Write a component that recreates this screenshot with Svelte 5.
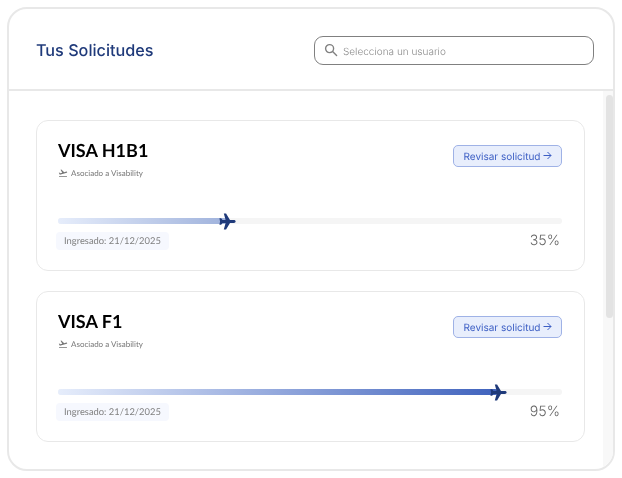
<script>
  const items = [
    { name: 'VISA H1B1', pct: 35, fill: 169, stops: '#e6edfb, #9fb2dc' },
    { name: 'VISA F1', pct: 95, fill: 440, stops: '#e6edfb, #3f62bd' }
  ];
</script>

<div class="shell">
  <header class="top">
    <h1>Tus Solicitudes</h1>
    <div class="search">
      <svg width="14" height="14" viewBox="0 0 14 14" fill="none" stroke="#808080" stroke-width="1.4">
        <circle cx="5.6" cy="5.6" r="4" />
        <path d="M8.6 8.6L12.6 12.6" stroke-linecap="round" />
      </svg>
      <span>Selecciona un usuario</span>
    </div>
  </header>
  <div class="body">
    <main class="list">
      {#each items as item}
        <section class="card">
          <div class="row">
            <div>
              <h2>{item.name}</h2>
              <div class="assoc">
                <svg width="10" height="10" viewBox="0 0 24 24" fill="#777">
                  <path d="M2.5 19h19v2h-19v-2zm19.57-9.36c-.21-.8-1.04-1.28-1.84-1.06L14.92 10l-6.9-6.43-1.93.51 4.14 7.17-4.97 1.33-1.97-1.54-1.45.39 2.59 4.49 16.57-4.43c.81-.23 1.28-1.05 1.07-1.85z" />
                </svg>
                <span>Asociado a Visability</span>
              </div>
            </div>
            <div class="btn">
              <span>Revisar solicitud</span>
              <svg width="9" height="10" viewBox="0 0 9 10" fill="none" stroke="#3d5fc4" stroke-width="1">
                <path d="M.5 4.500H8M4.500 1L8 4.500L4.500 8" />
              </svg>
            </div>
          </div>
          <div class="track">
            <div class="fill" style="width: {item.fill}px; background: linear-gradient(90deg, {item.stops})">
              <svg class="plane" width="17" height="17" viewBox="0 0 24 24" fill="#1f3a7a">
                <path d="M23.500 12c0-1.200-1.200-2-2.400-2H15.500L10 .8H6.800l2.500 9.200H5L3 7.500H.6l.9 4.500-.9 4.500H3L5 14h4.300L6.800 23.200H10L15.500 14h5.600C22.300 14 23.500 13.200 23.500 12z" />
              </svg>
            </div>
          </div>
          <div class="foot">
            <span class="date">Ingresado: 21/12/2025</span>
            <span class="pct">{item.pct}%</span>
          </div>
        </section>
      {/each}
    </main>
    <div class="scroll"><div class="thumb"></div></div>
  </div>
</div>

<style>
  :global(body) {
    margin: 0;
    background: #fff;
  }
  .shell {
    box-sizing: border-box;
    width: 608px;
    height: 464px;
    margin: 7px 0 0 7px;
    border: 2px solid #e8e8e8;
    border-radius: 20px;
    background: #fff;
    display: flex;
    flex-direction: column;
    overflow: hidden;
    text-rendering: geometricPrecision;
    will-change: transform;
  }
  .top {
    box-sizing: border-box;
    height: 82px;
    flex: none;
    border-bottom: 2px solid #e8e8e8;
    display: flex;
    align-items: center;
    justify-content: space-between;
    padding: 2px 19px 0 27px;
  }
  h1 {
    margin: 0 0 1px;
    font: 500 16.2px/20px Inter, sans-serif;
    color: #1f3a7a;
  }
  .search {
    box-sizing: border-box;
    width: 280px;
    height: 29px;
    border: 1px solid #808080;
    border-radius: 9px;
    display: flex;
    align-items: center;
    gap: 5px;
    padding: 0 9px;
  }
  .search span {
    font: 300 10px/14px Inter, sans-serif;
    color: #8a8a8a;
    position: relative;
    top: 2px;
  }
  .body {
    flex: 1;
    min-height: 0;
    display: flex;
  }
  .list {
    flex: 1;
    padding: 29px 18px 0 27px;
    display: flex;
    flex-direction: column;
    gap: 20px;
  }
  .card {
    box-sizing: border-box;
    height: 151px;
    border: 1px solid #e8e8e8;
    border-radius: 12px;
    padding: 17px 22px 0 21px;
  }
  .row {
    display: flex;
    justify-content: space-between;
    align-items: flex-start;
    height: 80px;
  }
  h2 {
    margin: 0;
    font: 700 18px/24px Lato, sans-serif;
    color: #000;
  }
  .assoc {
    display: flex;
    align-items: center;
    gap: 3px;
    margin-top: 5px;
  }
  .assoc span {
    font: 400 8px/12px Lato, sans-serif;
    color: #777;
  }
  .btn {
    box-sizing: border-box;
    margin-top: 7px;
    width: 109px;
    height: 22px;
    padding-top: 1px;
    border: 1px solid #9fb2e6;
    border-radius: 5px;
    background: #e8eefc;
    display: flex;
    align-items: center;
    justify-content: center;
    gap: 2px;
    font: 400 10px/14px Inter, sans-serif;
    color: #3d5fc4;
  }
  .btn svg {
    margin-top: -2px;
  }
  .track {
    height: 6px;
    border-radius: 3px;
    background: #f5f5f5;
  }
  .fill {
    position: relative;
    height: 6px;
    border-radius: 3px;
  }
  .plane {
    position: absolute;
    right: -9px;
    top: -5px;
  }
  .foot {
    display: flex;
    justify-content: space-between;
    align-items: center;
    margin: 8px 2px 0 -2px;
  }
  .date {
    box-sizing: border-box;
    height: 18px;
    padding: 1px 8px 0;
    border-radius: 4px;
    background: #f6f8fe;
    font: 400 9.4px/18px Lato, sans-serif;
    color: #808080;
  }
  .pct {
    font: 300 14.2px/18px Inter, sans-serif;
    color: #666;
  }
  .scroll {
    width: 10px;
    flex: none;
    background: #f8f8f8;
    padding: 4px 0 0 3px;
    box-sizing: border-box;
  }
  .thumb {
    height: 223px;
    border-radius: 4px;
    background: #e3e3e3;
  }
</style>
